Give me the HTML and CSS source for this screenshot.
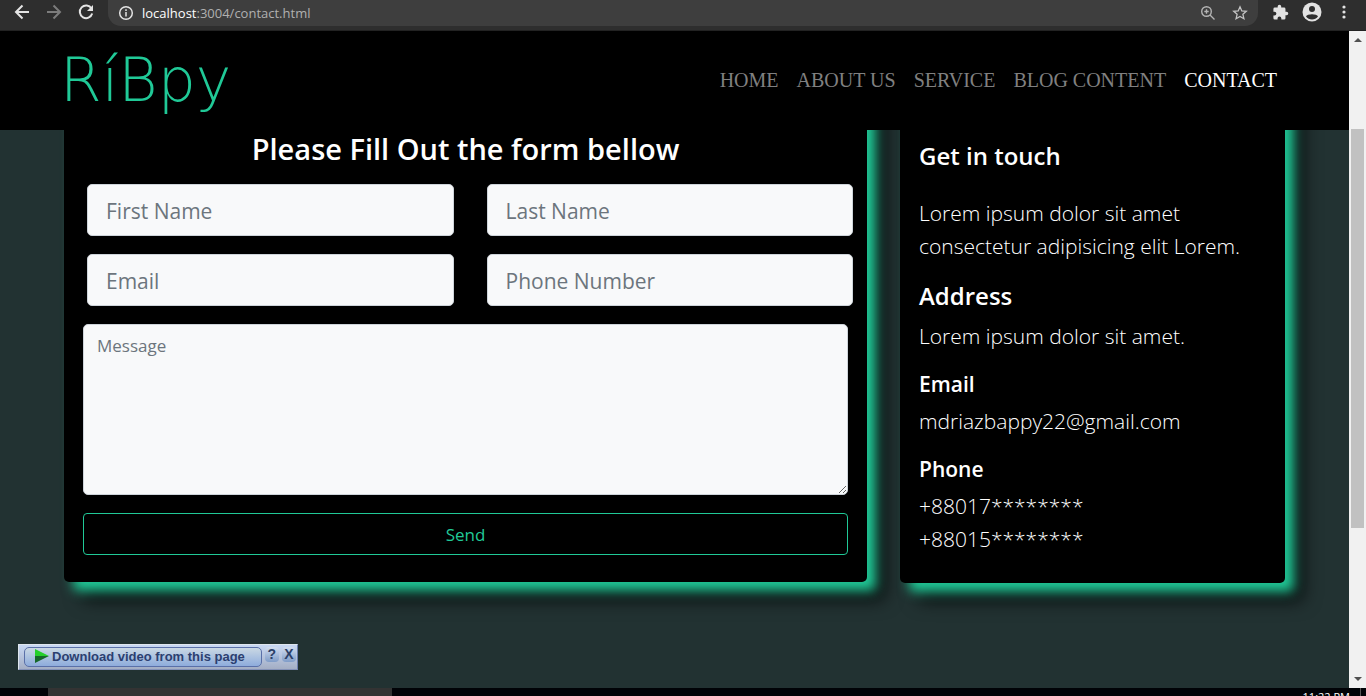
FILE: index.html
```html
<!DOCTYPE html>
<html lang="en">
<head>
<meta charset="utf-8">
<title>Contact</title>
<link rel="stylesheet" href="styles.css">
</head>
<body>
<div class="browser-bar">
  <button class="icon-btn" aria-label="Back"><svg width="24" height="24" viewBox="0 0 24 24" fill="none" stroke="#e4e4e4" stroke-width="2"><path d="M19 12H6M12.500 5.500L6 12l6.500 6.500"/></svg></button>
  <button class="icon-btn" aria-label="Forward"><svg width="24" height="24" viewBox="0 0 24 24" fill="none" stroke="#7c7c7c" stroke-width="2"><path d="M5 12h13M11.500 5.500L18 12l-6.500 6.500"/></svg></button>
  <button class="icon-btn" aria-label="Reload"><svg width="24" height="24" viewBox="0 0 24 24" fill="none" stroke="#e4e4e4" stroke-width="2"><path d="M17.500 8.500A6.300 6.300 0 1 0 18.200 13.500"/><path d="M19 5v6h-6z" fill="#e4e4e4" stroke="none"/></svg></button>
  <div class="address">
    <svg width="16" height="16" viewBox="0 0 16 16" fill="none" stroke="#e4e4e4" stroke-width="1.500"><circle cx="8" cy="8" r="6.300"/><path d="M8 7v4.500M8 4.300v1.600"/></svg>
    <span class="url"><b>localhost</b>:3004/contact.html</span>
    <svg width="16" height="16" viewBox="0 0 16 16" fill="none" stroke="#b4b4b4" stroke-width="1.400"><circle cx="6.500" cy="6.500" r="4.800"/><path d="M10 10l4.500 4.500M4.300 6.500h4.400M6.500 4.300v4.400"/></svg>
    <svg width="16" height="16" viewBox="0 0 16 16" fill="none" stroke="#c4c4c4" stroke-width="1.300"><path d="M8 1.800l1.800 4.100 4.500.4-3.400 3 1 4.400L8 11.400l-3.900 2.300 1-4.400-3.400-3 4.500-.4z"/></svg>
  </div>
  <button class="icon-btn" aria-label="Extensions"><svg width="17" height="17" viewBox="0 0 24 24" fill="#e2e2e2"><path d="M20.500 11H19V7a2 2 0 0 0-2-2h-4V3.500a2.500 2.500 0 0 0-5 0V5H4a2 2 0 0 0-2 2v3.800h1.500a2.700 2.700 0 0 1 0 5.400H2V20a2 2 0 0 0 2 2h3.800v-1.500a2.700 2.700 0 0 1 5.400 0V22H17a2 2 0 0 0 2-2v-4h1.500a2.500 2.500 0 0 0 0-5z"/></svg></button>
  <button class="icon-btn" aria-label="Profile"><svg width="20" height="20" viewBox="0 0 20 20"><circle cx="10" cy="10" r="9.500" fill="#e2e2e2"/><circle cx="10" cy="7" r="3" fill="#2e2e2e"/><path d="M4 14.500c1-3 11-3 12 0a7.500 7.500 0 0 1-12 0z" fill="#2e2e2e"/></svg></button>
  <button class="icon-btn" aria-label="Menu"><svg width="16" height="16" viewBox="0 0 16 16" fill="#e2e2e2"><circle cx="8" cy="3" r="1.600"/><circle cx="8" cy="8" r="1.600"/><circle cx="8" cy="13" r="1.600"/></svg></button>
</div>

<div class="viewport">
  <div class="page">
    <header class="navbar">
      <a class="brand" href="#">RíBpy</a>
      <nav class="nav">
        <a href="#">HOME</a>
        <a href="#">ABOUT US</a>
        <a href="#">SERVICE</a>
        <a href="#">BLOG CONTENT</a>
        <a href="#" class="active" aria-current="page">CONTACT</a>
      </nav>
    </header>
    <main class="content">
      <form class="card form-card">
        <h1>Please Fill Out the form bellow</h1>
        <div class="fields">
          <input type="text" placeholder="First Name" aria-label="First Name">
          <input type="text" placeholder="Last Name" aria-label="Last Name">
          <input type="email" placeholder="Email" aria-label="Email">
          <input type="tel" placeholder="Phone Number" aria-label="Phone Number">
        </div>
        <textarea placeholder="Message" aria-label="Message"></textarea>
        <button class="send" type="button">Send</button>
      </form>
      <section class="card info-card">
        <h2 class="lead">Get in touch</h2>
        <p>Lorem ipsum dolor sit amet consectetur adipisicing elit Lorem.</p>
        <h2>Address</h2>
        <p>Lorem ipsum dolor sit amet.</p>
        <h3>Email</h3>
        <p>mdriazbappy22@gmail.com</p>
        <h3>Phone</h3>
        <p>+88017********<br>+88015********</p>
      </section>
    </main>
    <div class="download">
      <button class="download-main"><svg width="16" height="16" viewBox="0 0 16 16"><path d="M1 1l14 7H1z" fill="#25d02c"/><path d="M15 8L1 15V8z" fill="#15682a"/></svg>Download video from this page</button>
      <button class="mini" aria-label="Help">?</button>
      <button class="mini" aria-label="Close">X</button>
    </div>
  </div>
  <div class="scrollbar">
    <svg class="arrow" viewBox="0 0 17 17" fill="#505050"><path d="M5 11l4-4 4 4z"/></svg>
    <div class="track"><div class="thumb"></div></div>
    <svg class="arrow" viewBox="0 0 17 17" fill="#505050"><path d="M5 6l4 4 4-4z"/></svg>
  </div>
</div>

<footer class="taskbar">
  <div class="search"></div>
  <span class="clock">11:22 PM</span>
</footer>
</body>
</html>
```

FILE: styles.css
```css
* { box-sizing: border-box; }

body {
  margin: 0;
  height: 100vh;
  display: flex;
  flex-direction: column;
  overflow: hidden;
  background: #223232;
  color: #fff;
  font-family: "Open Sans", "Noto Sans", sans-serif;
}

h1, h2, h3, p { margin: 0; }
button { padding: 0; border: 0; font: inherit; cursor: pointer; }
svg { display: block; flex: none; }

.browser-bar {
  flex: none;
  height: 31px;
  display: flex;
  align-items: flex-start;
  padding: 0 10px;
  gap: 8px;
  background: #2e2e2e;
  border-bottom: 1px solid #222;
}
.icon-btn {
  width: 24px;
  height: 24px;
  display: grid;
  place-items: center;
  background: none;
}
.address {
  flex: 1;
  height: 26px;
  display: flex;
  align-items: center;
  gap: 16px;
  margin: 0 2px;
  padding: 0 10px;
  background: #3e3e3e;
  border-radius: 0 0 13px 13px;
}
.url {
  flex: 1;
  margin-left: -8px;
  font-size: 13px;
  line-height: 24px;
  color: #b0b0b0;
}
.url b { font-weight: 400; color: #fff; }

.viewport { flex: 1; min-height: 0; display: flex; }
.page {
  flex: 1;
  position: relative;
  overflow: hidden;
}

.navbar {
  position: relative;
  z-index: 1;
  height: 99px;
  display: flex;
  align-items: center;
  justify-content: space-between;
  padding: 0 72px 2px 60px;
  background: #000;
}
.brand {
  font-family: "DejaVu Sans", sans-serif;
  font-weight: 200;
  font-size: 60px;
  line-height: 64px;
  color: #20c997;
  text-decoration: none;
}
.nav { display: flex; gap: 18px; }
.nav a {
  font-family: "Liberation Serif", serif;
  font-size: 20px;
  line-height: 24px;
  color: #808080;
  text-decoration: none;
}
.nav .active { color: #fff; }

.content {
  display: grid;
  grid-template-columns: repeat(12, 1fr);
  column-gap: 33px;
  align-items: start;
  margin-top: -40px;
  padding: 0 64px;
}
.card {
  padding: 40px 19px 27px;
  background: #000;
  border-radius: 5px;
  box-shadow: 9px 9px 12px #20c997, 18px 18px 18px rgba(0, 0, 0, 0.7);
}
.form-card {
  grid-column: span 8;
  display: flex;
  flex-direction: column;
  gap: 18px;
}
.form-card h1 {
  padding-top: 2px;
  font-size: 29px;
  font-weight: 600;
  line-height: 34px;
  text-align: center;
}
.fields {
  display: grid;
  grid-template-columns: 1fr 1fr;
  gap: 18px 33px;
  margin: 0 -5px 0 4px;
}
input, textarea {
  width: 100%;
  border: 1px solid #ced4da;
  border-radius: 5px;
  background: #f8f9fa;
  font-family: inherit;
}
input {
  height: 52px;
  padding: 2px 18px 0;
  font-size: 21px;
}
textarea {
  display: block;
  height: 171px;
  padding: 8px 13px;
  font-size: 17px;
  line-height: 26px;
}
::placeholder { color: #6c757d; opacity: 1; }
.send {
  height: 42px;
  border: 1px solid #20c997;
  border-radius: 4px;
  background: #000;
  color: #20c997;
  font-size: 17px;
}

.info-card {
  grid-column: span 4;
  padding-top: 50px;
}
.info-card h2 {
  font-size: 24px;
  font-weight: 600;
  line-height: 32px;
  margin-bottom: 8px;
}
.info-card .lead { margin-bottom: 25px; }
.info-card h3 {
  font-size: 21px;
  font-weight: 600;
  line-height: 28px;
  margin-bottom: 7px;
}
.info-card p {
  font-size: 21px;
  font-weight: 300;
  line-height: 33px;
  margin-bottom: 17px;
}
.info-card p:last-child { margin-bottom: 0; }

.download {
  position: absolute;
  left: 18px;
  bottom: 18px;
  display: flex;
  gap: 3px;
  padding: 2px 1px 2px 5px;
  background: linear-gradient(#c8d8f4, #a4aec4);
  border: 1px solid #dfe6ee;
  border-right-color: #6d7fae;
  border-bottom-color: #8391b8;
}
.download-main {
  height: 20px;
  display: flex;
  align-items: center;
  gap: 2px;
  padding: 0 16px 2px 9px;
  border: 1px solid #5a70a8;
  border-radius: 5px;
  background: linear-gradient(#cad8e4, #8eacdc);
  color: #2c3f70;
  font: bold 13px "Liberation Sans", sans-serif;
}
.mini {
  width: 14px;
  height: 15px;
  border-radius: 4px;
  background: linear-gradient(#d3def0, #7f9cc8);
  color: #2c4068;
  font: bold 14px/15px "Liberation Sans", sans-serif;
}

.scrollbar {
  flex: none;
  width: 17px;
  display: flex;
  flex-direction: column;
  background: #f1f1f1;
}
.arrow { width: 17px; height: 17px; }
.track { flex: 1; display: flex; flex-direction: column; padding: 0 2px; }
.track::before { content: ""; flex: 81; }
.track::after { content: ""; flex: 143; }
.thumb { flex: 399; background: #c1c1c1; }

.taskbar {
  flex: none;
  height: 8px;
  display: flex;
  justify-content: space-between;
  padding: 0 5px 0 48px;
  overflow: hidden;
  background: #010307;
}
.search { width: 344px; background: #333; }
.clock {
  padding: 2px 10px 0 0;
  border-right: 1px solid #555;
  font-size: 11px;
  line-height: 14px;
}
```
